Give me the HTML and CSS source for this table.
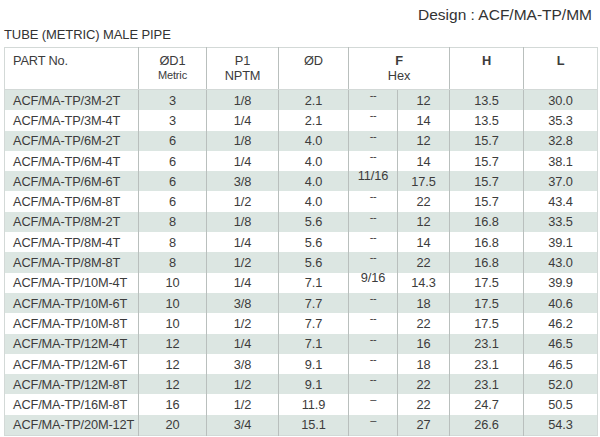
FILE: index.html
```html
<!DOCTYPE html>
<html>
<head>
<meta charset="utf-8">
<link rel="stylesheet" href="styles.css">
</head>
<body>
<div class="page">
  <div class="design">Design : ACF/MA-TP/MM</div>
  <div class="title">TUBE (METRIC) MALE PIPE</div>
  <table class="spec">
    <colgroup>
      <col class="c-part"><col class="c-d1"><col class="c-p1"><col class="c-d"><col class="c-f1"><col class="c-f2"><col class="c-h"><col class="c-l">
    </colgroup>
    <thead>
      <tr>
        <th class="left">PART No.</th>
        <th>ØD1<span class="sub small">Metric</span></th>
        <th>P1<span class="sub">NPTM</span></th>
        <th>ØD</th>
        <th colspan="2"><b>F</b><span class="sub">Hex</span></th>
        <th><b>H</b></th>
        <th><b>L</b></th>
      </tr>
    </thead>
    <tbody>
      <tr class="band"><td class="left">ACF/MA-TP/3M-2T</td><td>3</td><td>1/8</td><td>2.1</td><td class="f1 dash">--</td><td>12</td><td>13.5</td><td>30.0</td></tr>
      <tr><td class="left">ACF/MA-TP/3M-4T</td><td>3</td><td>1/4</td><td>2.1</td><td class="f1 dash">--</td><td>14</td><td>13.5</td><td>35.3</td></tr>
      <tr class="band"><td class="left">ACF/MA-TP/6M-2T</td><td>6</td><td>1/8</td><td>4.0</td><td class="f1 dash">--</td><td>12</td><td>15.7</td><td>32.8</td></tr>
      <tr><td class="left">ACF/MA-TP/6M-4T</td><td>6</td><td>1/4</td><td>4.0</td><td class="f1 dash">--</td><td>14</td><td>15.7</td><td>38.1</td></tr>
      <tr class="band"><td class="left">ACF/MA-TP/6M-6T</td><td>6</td><td>3/8</td><td>4.0</td><td class="f1">11/16</td><td>17.5</td><td>15.7</td><td>37.0</td></tr>
      <tr><td class="left">ACF/MA-TP/6M-8T</td><td>6</td><td>1/2</td><td>4.0</td><td class="f1 dash">--</td><td>22</td><td>15.7</td><td>43.4</td></tr>
      <tr class="band"><td class="left">ACF/MA-TP/8M-2T</td><td>8</td><td>1/8</td><td>5.6</td><td class="f1 dash">--</td><td>12</td><td>16.8</td><td>33.5</td></tr>
      <tr><td class="left">ACF/MA-TP/8M-4T</td><td>8</td><td>1/4</td><td>5.6</td><td class="f1 dash">--</td><td>14</td><td>16.8</td><td>39.1</td></tr>
      <tr class="band"><td class="left">ACF/MA-TP/8M-8T</td><td>8</td><td>1/2</td><td>5.6</td><td class="f1 dash">--</td><td>22</td><td>16.8</td><td>43.0</td></tr>
      <tr><td class="left">ACF/MA-TP/10M-4T</td><td>10</td><td>1/4</td><td>7.1</td><td class="f1">9/16</td><td>14.3</td><td>17.5</td><td>39.9</td></tr>
      <tr class="band"><td class="left">ACF/MA-TP/10M-6T</td><td>10</td><td>3/8</td><td>7.7</td><td class="f1 dash">--</td><td>18</td><td>17.5</td><td>40.6</td></tr>
      <tr><td class="left">ACF/MA-TP/10M-8T</td><td>10</td><td>1/2</td><td>7.7</td><td class="f1 dash">--</td><td>22</td><td>17.5</td><td>46.2</td></tr>
      <tr class="band"><td class="left">ACF/MA-TP/12M-4T</td><td>12</td><td>1/4</td><td>7.1</td><td class="f1 dash">--</td><td>16</td><td>23.1</td><td>46.5</td></tr>
      <tr><td class="left">ACF/MA-TP/12M-6T</td><td>12</td><td>3/8</td><td>9.1</td><td class="f1 dash">--</td><td>18</td><td>23.1</td><td>46.5</td></tr>
      <tr class="band"><td class="left">ACF/MA-TP/12M-8T</td><td>12</td><td>1/2</td><td>9.1</td><td class="f1 dash">--</td><td>22</td><td>23.1</td><td>52.0</td></tr>
      <tr><td class="left">ACF/MA-TP/16M-8T</td><td>16</td><td>1/2</td><td>11.9</td><td class="f1 dash">–</td><td>22</td><td>24.7</td><td>50.5</td></tr>
      <tr class="band"><td class="left">ACF/MA-TP/20M-12T</td><td>20</td><td>3/4</td><td>15.1</td><td class="f1 dash">–</td><td>27</td><td>26.6</td><td>54.3</td></tr>
    </tbody>
  </table>
</div>
</body>
</html>
```

FILE: styles.css
```css
html, body {
  margin: 0;
  padding: 0;
  background: #ffffff;
}

.page {
  padding: 4px 3px 0 4px;
  font-family: "Liberation Sans", Arial, sans-serif;
  color: #3c3c3c;
}

.design {
  text-align: right;
  font-size: 15.5px;
  line-height: 18px;
  padding: 2px 5px 0 0;
  color: #333;
}

.title {
  font-size: 13px;
  line-height: 16px;
  margin-top: 3px;
  letter-spacing: -0.1px;
  color: #333;
}

.spec {
  margin-top: 4px;
  width: 593px;
  table-layout: fixed;
  border-collapse: collapse;
  font-size: 12.8px;
  letter-spacing: -0.15px;
  border: 1px solid #d3d9d7;
}

.c-part { width: 134px; }
.c-d1 { width: 68px; }
.c-p1 { width: 72px; }
.c-d { width: 70px; }
.c-f1 { width: 49px; }
.c-f2 { width: 52px; }
.c-h { width: 74px; }
.c-l { width: 74px; }

.spec th {
  height: 36px;
  padding: 5px 0 0 0;
  vertical-align: top;
  font-weight: normal;
  text-align: center;
  line-height: 15px;
  border-left: 1px solid #b9bfbd;
  border-bottom: 1px solid #d3d9d7;
}

.spec th b {
  font-weight: bold;
}

.spec .sub {
  display: block;
}

.spec .small {
  font-size: 11px;
}

.spec td {
  height: 20.3px;
  padding: 0;
  text-align: center;
  line-height: 15px;
  vertical-align: middle;
  border-left: 1px solid #b9bfbd;
  white-space: nowrap;
}

.spec .left {
  text-align: left;
  padding-left: 8px;
  border-left: none;
}

.spec td.f1 {
  vertical-align: top;
  line-height: 10px;
}

.spec td.dash {
  font-size: 11px;
  letter-spacing: -0.5px;
}

.band td {
  background: #dce6e2;
}
```
